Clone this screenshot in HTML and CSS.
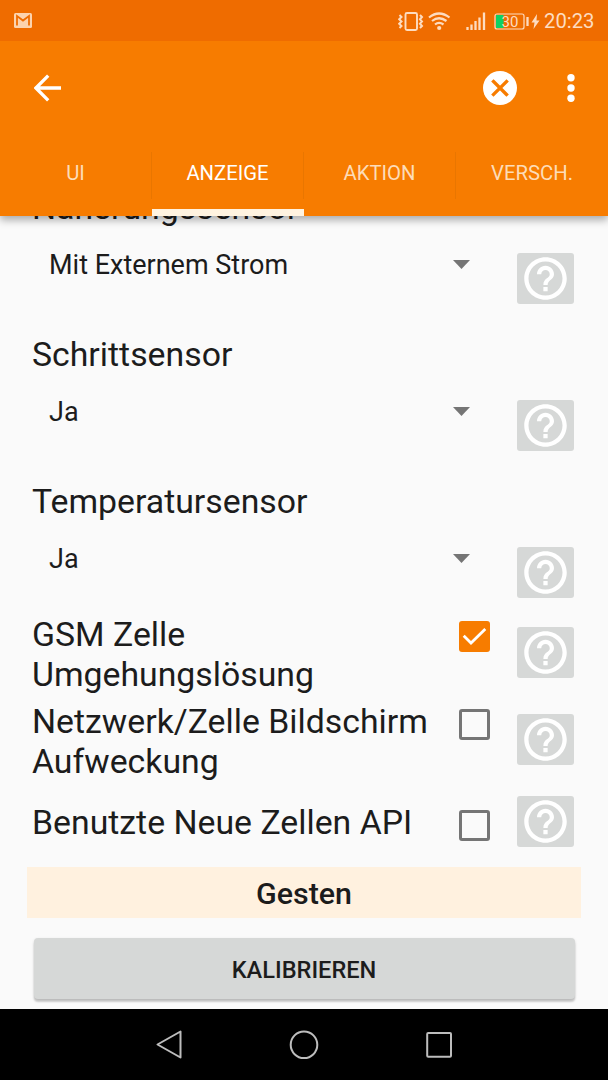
FILE: index.html
```
<!DOCTYPE html>
<html lang="de">
<head>
    <meta charset="UTF-8">
    <meta name="viewport" content="width=device-width, initial-scale=1.0">
    <title>Einstellungen</title>
    <link rel="stylesheet" href="styles.css">
</head>
<body>
    <!-- shared icon -->
    <svg class="defs" width="0" height="0">
        <symbol id="help" viewBox="0 0 24 24">
            <path d="M11 18h2v-2h-2v2zm1-16C6.480 2 2 6.480 2 12s4.480 10 10 10 10-4.480 10-10S17.520 2 12 2zm0 18c-4.410 0-8-3.590-8-8s3.590-8 8-8 8 3.590 8 8-3.590 8-8 8zm0-14c-2.210 0-4 1.790-4 4h2c0-1.100.9-2 2-2s2 .9 2 2c0 2-3 1.750-3 5h2c0-2.250 3-2.500 3-5 0-2.210-1.790-4-4-4z"/>
        </symbol>
    </svg>

    <header class="header">
        <div class="status-bar">
            <svg class="gmail" width="18" height="15" viewBox="0 0 18 15">
                <rect width="18" height="15" rx="1.500" fill="#fcd3ae"/>
                <path d="M3 12.500V3l6 4.500L15 3v9.500" fill="none" stroke="#ef6c00" stroke-width="1.800"/>
            </svg>
            <svg class="status-icons" width="150" height="24" viewBox="0 0 150 24">
                <g fill="none" stroke="#fddcc0">
                    <rect x="7.500" y="4" width="11.500" height="17" rx="1.500" stroke-width="1.900"/>
                    <path d="M1.500 6l2 2-2.300 2.300L3.500 12.500l-2.300 2.200L3.500 17l-2 2M22 6l2 2-2 2.300 2 2.200-2 2.200 2 2.300-2 2" stroke-width="2"/>
                    <path d="M31 8.500q10-8 20.500 0M34 12q7-5.500 14.500 0M37 15.500q4-3.300 8.500 0" stroke-width="2.200"/>
                    <path d="M69.500 18v3M73.500 15.500V21M77.500 12v9M81.500 8.500V21M86 3.500V21" stroke-width="2.300"/>
                    <rect x="97" y="5" width="29" height="15" rx="2" stroke-width="1.200"/>
                    <path d="M129.500 8v9" stroke-width="2.300"/>
                </g>
                <circle cx="41.200" cy="19" r="2.100" fill="#fddcc0"/>
                <rect x="98" y="6" width="7.500" height="13" fill="#0fd163"/>
                <text class="battery-text" x="112" y="18">30</text>
                <path d="M139 5l-5.500 8.500h3L135.500 20l6-8.500h-3z" fill="#fddcc0"/>
            </svg>
            <span class="clock">20:23</span>
        </div>
        <div class="toolbar">
            <svg class="back" width="28" height="28" viewBox="0 0 28 28">
                <path d="M27 14H2.500M14.200 1.600L1.900 14l12.300 12.400" fill="none" stroke="#fff" stroke-width="3.300"/>
            </svg>
            <svg class="cancel" width="34" height="34" viewBox="0 0 34 34">
                <circle cx="17" cy="17" r="17" fill="#fff"/>
                <path d="M10.500 10.500l13 13M23.500 10.500l-13 13" stroke="#f77c00" stroke-width="3.300" stroke-linecap="square"/>
            </svg>
            <svg class="more" width="8" height="28" viewBox="0 0 8 28">
                <g fill="#fff"><circle cx="4" cy="3.800" r="3.700"/><circle cx="4" cy="14" r="3.700"/><circle cx="4" cy="24.200" r="3.700"/></g>
            </svg>
        </div>
        <nav class="tabs">
            <a class="tab">UI</a>
            <a class="tab active">ANZEIGE</a>
            <a class="tab">AKTION</a>
            <a class="tab last">VERSCH.</a>
        </nav>
    </header>

    <main class="content">
        <div class="settings">
            <section class="setting">
                <h2 class="label">Näherungssensor</h2>
                <div class="row">
                    <div class="spinner">Mit Externem Strom</div>
                    <button class="help"><svg><use href="#help"/></svg></button>
                </div>
            </section>
            <section class="setting">
                <h2 class="label">Schrittsensor</h2>
                <div class="row">
                    <div class="spinner">Ja</div>
                    <button class="help"><svg><use href="#help"/></svg></button>
                </div>
            </section>
            <section class="setting">
                <h2 class="label">Temperatursensor</h2>
                <div class="row">
                    <div class="spinner">Ja</div>
                    <button class="help"><svg><use href="#help"/></svg></button>
                </div>
            </section>
            <div class="check-row first">
                <span class="label">GSM Zelle<br>Umgehungslösung</span>
                <span class="checkbox checked">
                    <svg width="31" height="31" viewBox="0 0 31 31"><path d="M4.700 14.800l7.300 7.200L26.300 8" fill="none" stroke="#fff" stroke-width="2.800"/></svg>
                </span>
                <button class="help"><svg><use href="#help"/></svg></button>
            </div>
            <div class="check-row">
                <span class="label">Netzwerk/Zelle Bildschirm<br>Aufweckung</span>
                <span class="checkbox"></span>
                <button class="help"><svg><use href="#help"/></svg></button>
            </div>
            <div class="check-row single">
                <span class="label">Benutzte Neue Zellen API</span>
                <span class="checkbox"></span>
                <button class="help"><svg><use href="#help"/></svg></button>
            </div>
        </div>
        <h3 class="category">Gesten</h3>
        <button class="calibrate">KALIBRIEREN</button>
    </main>

    <footer class="nav-bar">
        <svg width="26" height="30" viewBox="0 0 26 30"><path d="M24.500 1.500v26L1.500 14.500z"/></svg>
        <svg width="30" height="30" viewBox="0 0 30 30"><circle cx="15" cy="14.800" r="13.300"/></svg>
        <svg width="26" height="26" viewBox="0 0 26 26"><rect x="1.200" y="1" width="23.800" height="23.800" rx="1"/></svg>
    </footer>
</body>
</html>
```

FILE: styles.css
```
* {
    box-sizing: border-box;
}
body {
    margin: 0;
    height: 1080px;
    display: flex;
    flex-direction: column;
    font-family: Roboto, sans-serif;
    color: #1c1c1c;
    background-color: #fafafa;
    overflow: hidden;
}
svg {
    display: block;
    flex: none;
}
.defs {
    position: absolute;
}
.header {
    height: 216px;
    flex: none;
    z-index: 1;
    background-color: #f77c00;
    box-shadow: 0 4px 8px rgba(0, 0, 0, 0.32);
}
.status-bar {
    height: 41px;
    display: flex;
    align-items: center;
    padding: 0 14px;
    background-color: #ef6c00;
    color: #fddcc0;
}
.status-icons {
    margin-left: auto;
}
.battery-text {
    font-size: 15px;
    fill: #fddcc0;
    text-anchor: middle;
}
.clock {
    width: 50px;
    margin-left: -4px;
    font-size: 20.300px;
}
.toolbar {
    height: 94px;
    display: flex;
    align-items: center;
    padding: 0 33px 0 34px;
}
.cancel {
    margin-left: auto;
    margin-right: 50px;
}
.tabs {
    height: 81px;
    display: grid;
    grid-template-columns: repeat(4, 1fr);
}
.tab {
    padding: 17px 1px 0 0;
    height: 81px;
    line-height: 42px;
    text-align: center;
    font-size: 20.300px;
    color: #fddcb8;
    background: linear-gradient(#e97600, #e97600) no-repeat right 17px / 1px 47px;
}
.tab.last {
    padding-right: 0;
    background: none;
}
.tab.active {
    color: #fff;
    border-bottom: 7px solid #fff3e0;
}
.content {
    height: 793px;
    flex: none;
    overflow: hidden;
    padding: 0 27px;
}
.settings {
    margin-top: -28px;
    padding: 0 6px;
}
.setting {
    height: 116px;
    margin-bottom: 31px;
}
.label {
    margin: 0 0 0 -1px;
    font-size: 33.800px;
    font-weight: 400;
    line-height: 40px;
    white-space: nowrap;
}
.row {
    height: 76px;
    display: flex;
    justify-content: space-between;
    align-items: flex-end;
}
.spinner {
    width: 437px;
    height: 76px;
    display: flex;
    justify-content: space-between;
    padding: 21px 0 0 16px;
    font-size: 27px;
    line-height: 32px;
}
.spinner::after {
    content: "";
    margin-top: 11px;
    width: 17px;
    height: 9px;
    background-color: #757575;
    clip-path: polygon(0 0, 100% 0, 50% 100%);
}
.help {
    width: 57px;
    height: 51px;
    flex: none;
    display: flex;
    align-items: center;
    justify-content: center;
    margin: 0 1px 0 0;
    padding: 0;
    border: none;
    border-radius: 3px;
    background-color: #d6d8d7;
}
.help svg {
    width: 51px;
    height: 51px;
    fill: #fff;
}
.check-row {
    height: 80px;
    display: grid;
    grid-template-columns: 426px 58px 57px;
    margin-bottom: 7px;
}
.check-row.first {
    margin-top: -15px;
}
.check-row .label {
    padding-top: 1px;
}
.checkbox {
    width: 31px;
    height: 31px;
    margin-top: 8px;
    border: 3px solid #757575;
    border-radius: 3px;
}
.checkbox.checked {
    margin-top: 7px;
    border: none;
    background-color: #f77c00;
}
.check-row .help {
    margin-top: 13px;
}
.check-row.single {
    height: 51px;
    margin: 15px 0 20px;
}
.single .label {
    padding-top: 7px;
}
.single .checkbox {
    margin-top: 14px;
}
.single .help {
    margin-top: 0;
}
.category {
    height: 51px;
    margin: 0 0 20px;
    line-height: 54px;
    text-align: center;
    font-size: 30.400px;
    font-weight: 500;
    background-color: #fff1df;
}
.calibrate {
    display: block;
    width: 541px;
    height: 61px;
    margin: 0 auto;
    padding: 2px 0 0;
    border: none;
    border-radius: 4px;
    background-color: #d6d8d7;
    box-shadow: 0 3px 2px rgba(0, 0, 0, 0.18), 0 1px 3px rgba(0, 0, 0, 0.12);
    color: #1c1c1c;
    font-family: inherit;
    font-size: 23.600px;
    font-weight: 500;
}
.nav-bar {
    height: 71px;
    flex: none;
    z-index: 1;
    display: flex;
    align-items: center;
    justify-content: center;
    gap: 107px;
    background-color: #000;
    fill: none;
    stroke: #bdbdbd;
    stroke-width: 2;
    stroke-linejoin: round;
}
```
